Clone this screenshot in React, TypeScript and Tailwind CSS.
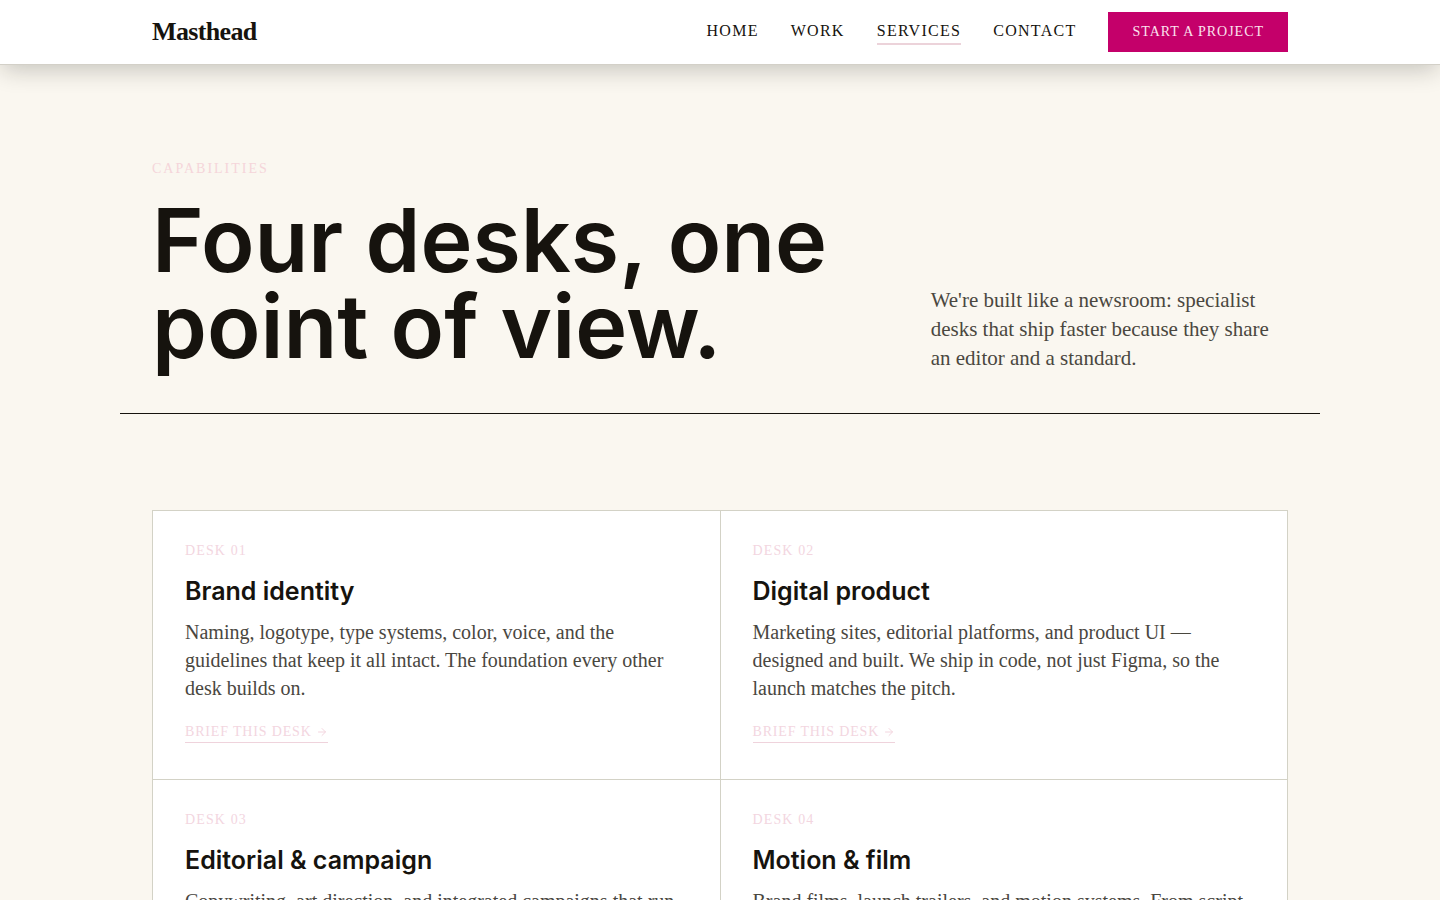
import { ArrowRight } from "lucide-react";

interface Desk {
  number: string;
  title: string;
  body: string;
}

const NAV_LINKS = [
  { label: "Home", active: false },
  { label: "Work", active: false },
  { label: "Services", active: true },
  { label: "Contact", active: false },
];

const DESKS: Desk[] = [
  {
    number: "01",
    title: "Brand identity",
    body: "Naming, logotype, type systems, color, voice, and the guidelines that keep it all intact. The foundation every other desk builds on.",
  },
  {
    number: "02",
    title: "Digital product",
    body: "Marketing sites, editorial platforms, and product UI — designed and built. We ship in code, not just Figma, so the launch matches the pitch.",
  },
  {
    number: "03",
    title: "Editorial & campaign",
    body: "Copywriting, art direction, and integrated campaigns that run",
  },
  {
    number: "04",
    title: "Motion & film",
    body: "Brand films, launch trailers, and motion systems. From script",
  },
];

function SiteHeader() {
  return (
    <header className="relative border-b border-[#d3d0c8] bg-white shadow-[0_6px_24px_-2px_rgba(22,19,14,0.24)]">
      <div className="mx-auto flex h-16 max-w-[1200px] items-center justify-between px-8">
        <a href="#" className="text-[26px] leading-8 font-bold tracking-tight">
          Masthead
        </a>
        <div className="flex items-center gap-8">
          <nav className="flex items-center gap-8">
            {NAV_LINKS.map((link) => (
              <a
                key={link.label}
                href="#"
                className={`border-b-2 text-base leading-6 tracking-[0.08em] uppercase ${
                  link.active ? "border-[#ecd3da]" : "border-transparent"
                }`}
              >
                {link.label}
              </a>
            ))}
          </nav>
          <button
            type="button"
            className="h-10 bg-[#c4006a] px-6 text-sm tracking-[0.07em] text-[#fbe3ee] uppercase"
          >
            Start a project
          </button>
        </div>
      </div>
    </header>
  );
}

function DeskCard({ desk }: { desk: Desk }) {
  return (
    <article className="bg-white p-8">
      <p className="text-sm leading-4 tracking-[0.08em] text-[#f3d6df] uppercase">Desk {desk.number}</p>
      <h2 className="mt-4 font-['Inter',sans-serif] text-[25px] leading-8 font-semibold">{desk.title}</h2>
      <p className="mt-[11px] text-xl leading-7 text-[#4a473f]">{desk.body}</p>
      <div className="mt-5 flex pb-1">
        <a
          href="#"
          className="flex items-center gap-1 border-b border-[#efd3dc] text-sm leading-5 tracking-[0.06em] text-[#f3d6df] uppercase"
        >
          Brief this desk
          <ArrowRight className="size-3" strokeWidth={2} aria-hidden="true" />
        </a>
      </div>
    </article>
  );
}

export default function App() {
  return (
    <div className="min-h-screen bg-[#faf7f0] font-['Liberation_Serif',serif] text-[#16130e]">
      <SiteHeader />
      <main>
        {/* Intro */}
        <section className="mx-auto max-w-[1200px] border-b border-[#16130e] px-8 pt-24 pb-10">
          <p className="text-sm leading-4 tracking-[2px] text-[#f5d5da] uppercase">Capabilities</p>
          <div className="mt-5 grid grid-cols-[2fr_1fr] items-end gap-16">
            <h1 className="pb-1 font-['Inter',sans-serif] text-[88px] leading-[86px] font-semibold">
              Four desks, one point of view.
            </h1>
            <p className="text-[21px] leading-[29px] text-[#4a473f]">
              We're built like a newsroom: specialist desks that ship faster because they share an editor and a
              standard.
            </p>
          </div>
        </section>

        {/* Desks */}
        <section className="mx-auto max-w-[1200px] px-8 py-24">
          <div className="grid grid-cols-2 gap-px border border-[#d3d2c6] bg-[#d3d2c6]">
            {DESKS.map((desk) => (
              <DeskCard key={desk.number} desk={desk} />
            ))}
          </div>
        </section>
      </main>
    </div>
  );
}
